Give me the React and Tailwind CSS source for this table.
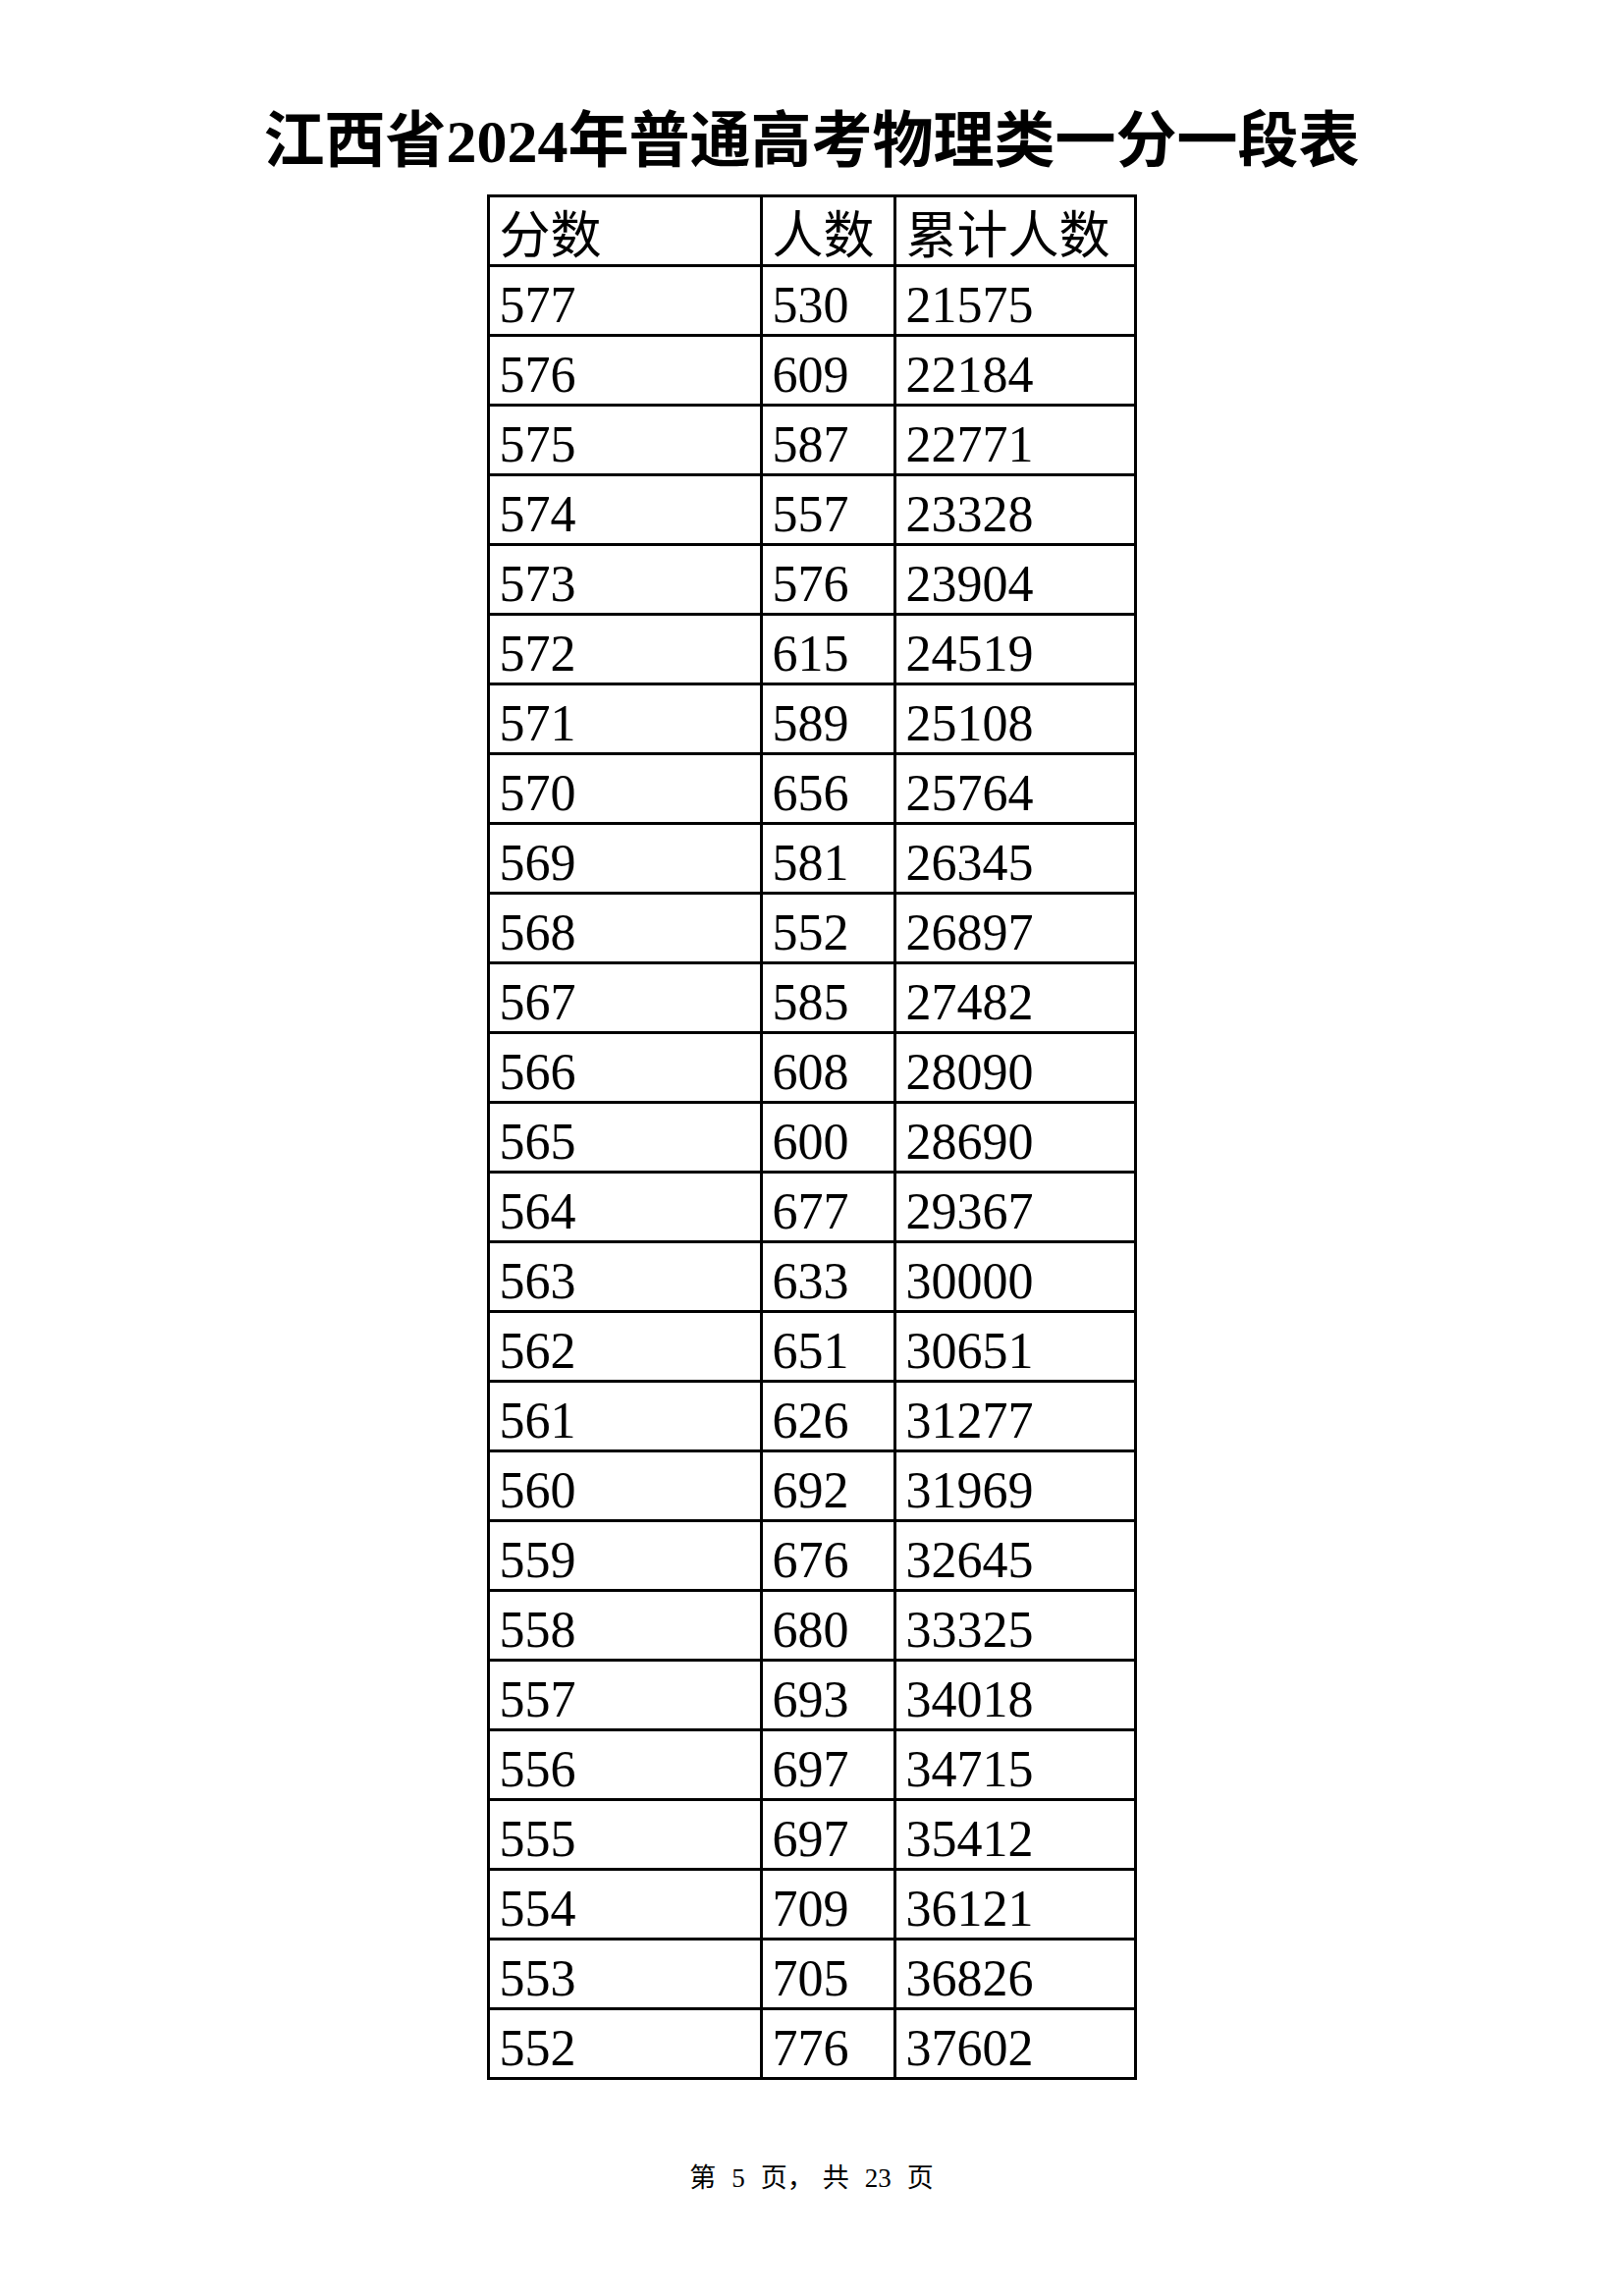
import React from "react";

const rows = [
  ["577", "530", "21575"],
  ["576", "609", "22184"],
  ["575", "587", "22771"],
  ["574", "557", "23328"],
  ["573", "576", "23904"],
  ["572", "615", "24519"],
  ["571", "589", "25108"],
  ["570", "656", "25764"],
  ["569", "581", "26345"],
  ["568", "552", "26897"],
  ["567", "585", "27482"],
  ["566", "608", "28090"],
  ["565", "600", "28690"],
  ["564", "677", "29367"],
  ["563", "633", "30000"],
  ["562", "651", "30651"],
  ["561", "626", "31277"],
  ["560", "692", "31969"],
  ["559", "676", "32645"],
  ["558", "680", "33325"],
  ["557", "693", "34018"],
  ["556", "697", "34715"],
  ["555", "697", "35412"],
  ["554", "709", "36121"],
  ["553", "705", "36826"],
  ["552", "776", "37602"],
];

const headers = ["分数", "人数", "累计人数"];

const serif = "font-['Liberation_Serif','Noto_Sans_CJK_SC',serif]";

const HeaderCell = ({ children }) => (
  <div className="h-[71px] border-r-[3px] border-b-[3px] border-black pl-[10px] pt-[9px] font-['Noto_Sans_CJK_SC',sans-serif] text-[52px] leading-[52px] text-black">
    {children}
  </div>
);

const Cell = ({ children }) => (
  <div className={`h-[71px] border-r-[3px] border-b-[3px] border-black pl-[10px] pt-[11px] ${serif} text-[52px] leading-[56px] text-black`}>
    {children}
  </div>
);

export default function App() {
  return (
    <div className="flex h-[2338px] w-[1653px] flex-col items-center bg-white">
      {/* title */}
      <h1 className={`mt-[113px] ${serif} text-[62px] font-bold leading-[62px] text-black`}>
        江西省2024年普通高考物理类一分一段表
      </h1>

      {/* score table */}
      <div className="mt-[23px] grid grid-cols-[278px_136px_245px] border-l-[3px] border-t-[3px] border-black">
        {headers.map((h) => (
          <HeaderCell key={h}>{h}</HeaderCell>
        ))}
        {rows.map((r) => (
          <React.Fragment key={r[0]}>
            <Cell>{r[0]}</Cell>
            <Cell>{r[1]}</Cell>
            <Cell>{r[2]}</Cell>
          </React.Fragment>
        ))}
      </div>

      {/* page footer */}
      <div className={`mt-[87px] flex items-baseline gap-[16px] ${serif} text-[27px] leading-[27px] text-black`}>
        <span>第</span>
        <span>5</span>
        <span>
          页<span className="inline-block w-[20px]">，</span>
        </span>
        <span>共</span>
        <span>23</span>
        <span>页</span>
      </div>
    </div>
  );
}
